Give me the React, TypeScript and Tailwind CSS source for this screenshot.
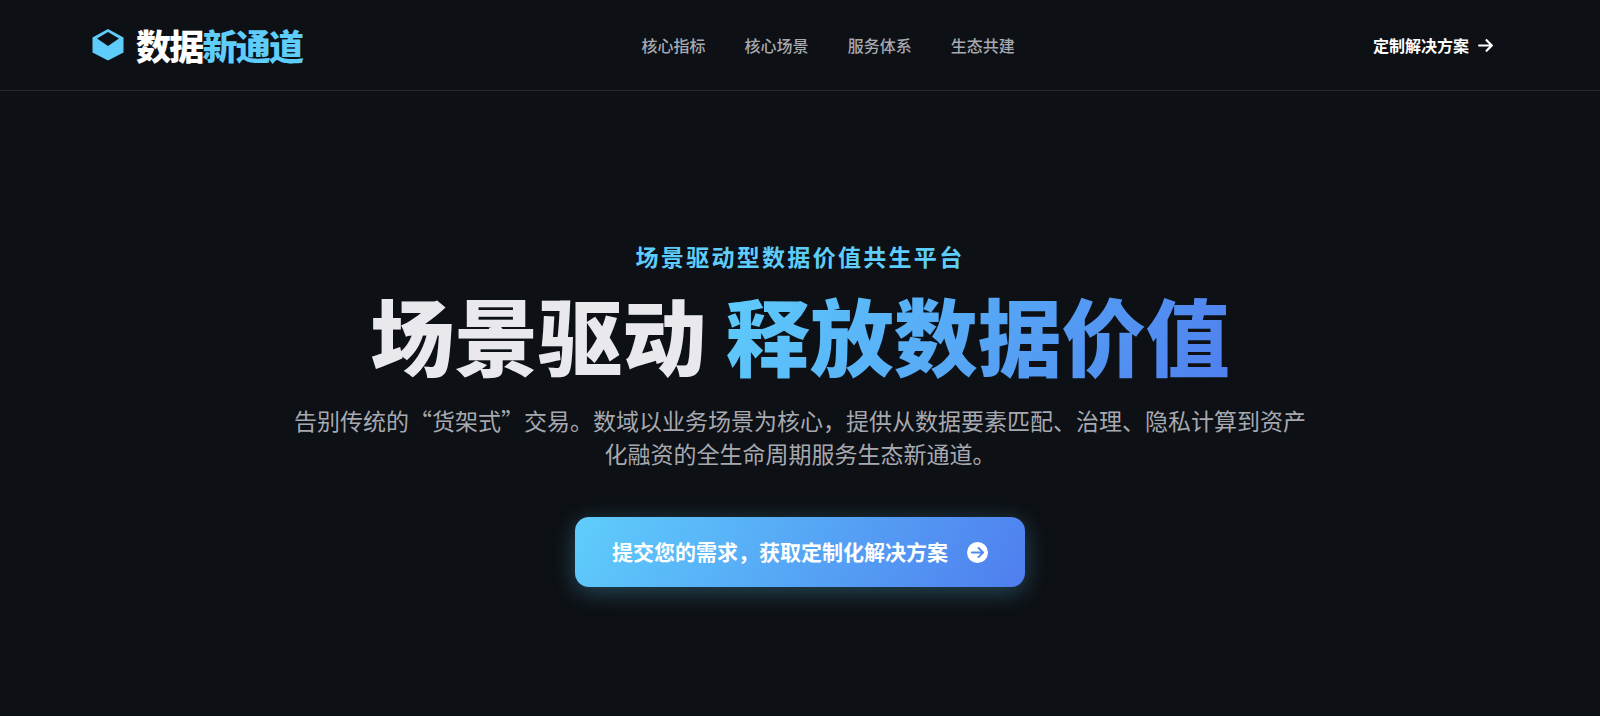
import { FaArrowRight, FaCircleArrowRight } from "react-icons/fa6";

const NAV_ITEMS = [
  { label: "核心指标", href: "#metrics" },
  { label: "核心场景", href: "#scenes" },
  { label: "服务体系", href: "#services" },
  { label: "生态共建", href: "#ecosystem" },
];

function CubeLogo() {
  return (
    <svg viewBox="-4 -4 40 40" className="h-10 w-10" fill="#5fcdfb" aria-hidden="true">
      <path
        fillRule="evenodd"
        d="M16 0 31.500 8.500v15L16 31.500 .5 23.500v-15L16 0Zm0 3L5 9.500 16 17l11-7.500L16 3Z"
      />
    </svg>
  );
}

function Header() {
  return (
    <header className="border-b border-[#24272d]">
      <div className="mx-auto flex h-[90px] max-w-[1424px] items-center justify-between">
        <a href="#" className="flex items-center gap-2">
          <CubeLogo />
          <span className="text-[35px] leading-10 font-black tracking-tighter text-white">
            数据<span className="text-[#5fcdfb]">新通道</span>
          </span>
        </a>

        <nav className="flex gap-[39px] text-base font-medium text-[#a7a9b1]">
          {NAV_ITEMS.map((item) => (
            <a key={item.href} href={item.href} className="hover:text-white">
              {item.label}
            </a>
          ))}
        </nav>

        <a
          href="#contact"
          className="flex items-center gap-[9px] px-[19px] text-base font-bold text-white"
        >
          定制解决方案
          <FaArrowRight className="h-[17px] w-[15px]" />
        </a>
      </div>
    </header>
  );
}

function Hero() {
  return (
    <main className="flex flex-col items-center px-6 pt-[147px] pb-[120px] text-center">
      <p className="text-[23px] leading-9 font-bold tracking-widest text-[#5fcdfb]">
        场景驱动型数据价值共生平台
      </p>
      <h1 className="mt-[18px] text-[84px] leading-[84px] font-black text-[#e8e8ed]">
        场景驱动{" "}
        <span className="bg-linear-120 from-[#5fcdfb] to-[#4f7eee] bg-clip-text text-transparent">
          释放数据价值
        </span>
      </h1>
      <p className="mt-7 max-w-[1030px] text-[23px] leading-[33px] text-[#a7a9b1]">
        告别传统的“货架式”交易。数域以业务场景为核心，提供从数据要素匹配、治理、隐私计算到资产化融资的全生命周期服务生态新通道。
      </p>
      <button
        type="button"
        className="mt-[47px] flex h-[70px] items-center gap-[19px] rounded-[14px] bg-linear-120 from-[#5fcdfb] to-[#4f7eee] px-[37px] text-[21px] font-bold text-white shadow-[0_5px_23px_rgba(95,205,251,0.3)]"
      >
        提交您的需求，获取定制化解决方案
        <FaCircleArrowRight className="h-[21px] w-[21px]" />
      </button>
    </main>
  );
}

export default function App() {
  return (
    <div
      lang="zh-CN"
      className="min-h-screen bg-[#0d1014] font-['Noto_Sans_CJK_SC',sans-serif] antialiased"
    >
      <Header />
      <Hero />
    </div>
  );
}
